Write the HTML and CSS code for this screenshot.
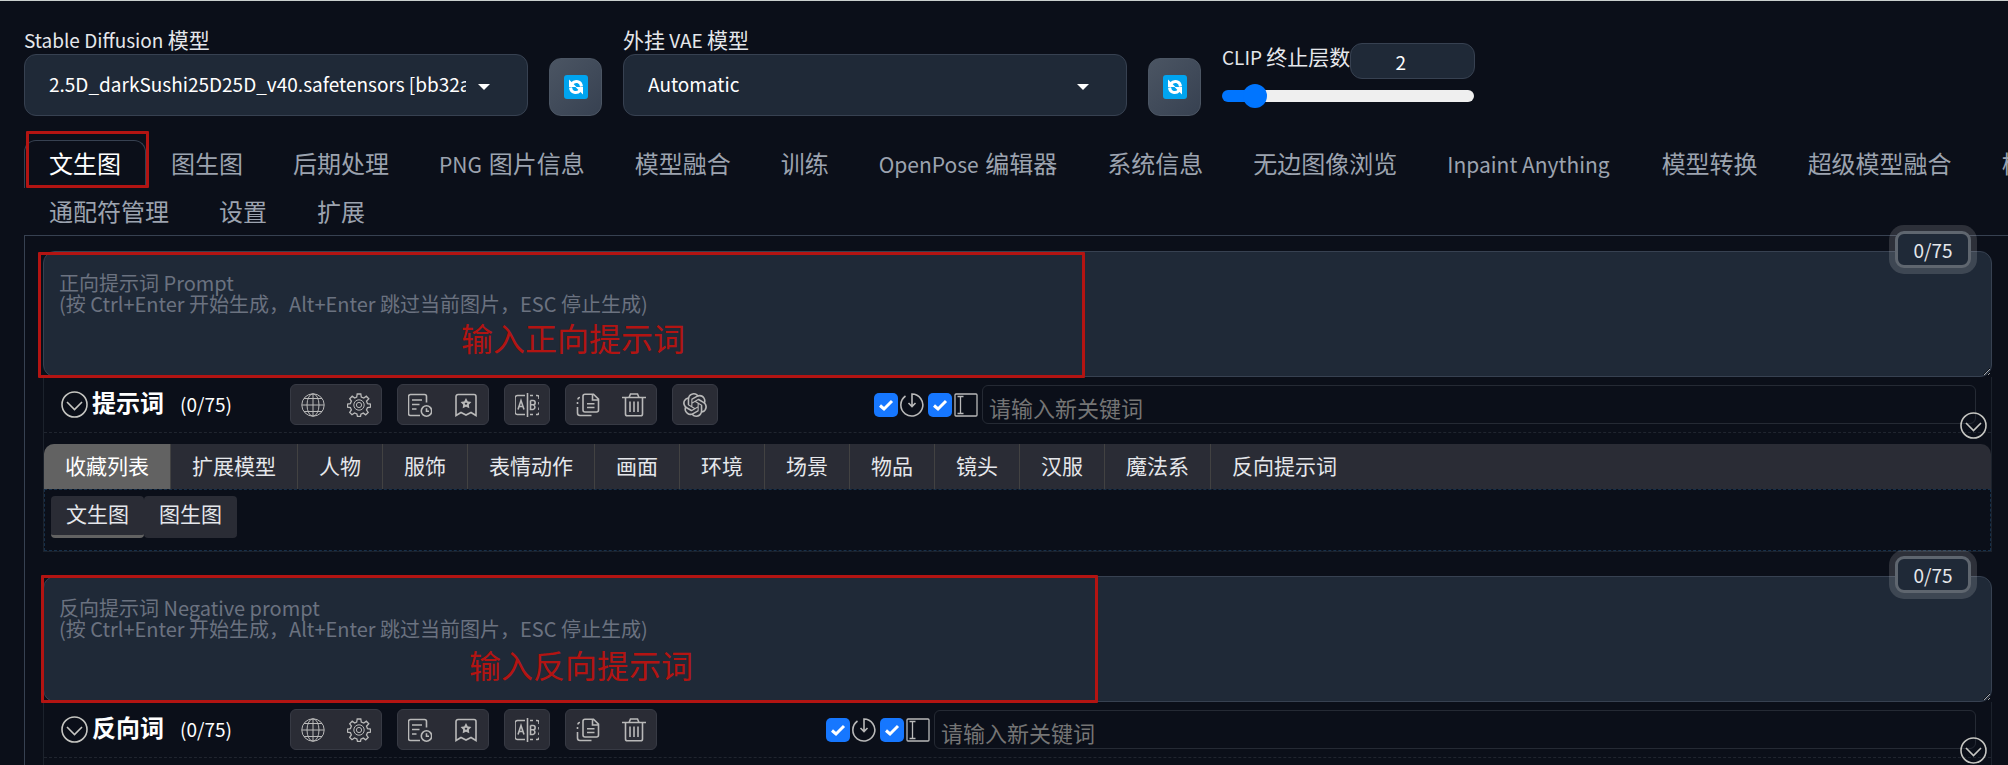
FILE: index.html
```html
<!DOCTYPE html>
<html lang="zh-CN">
<head>
<meta charset="utf-8">
<title>Stable Diffusion</title>
<link rel="stylesheet" href="styles.css">
</head>
<body>
<svg class="sprite" aria-hidden="true">
  <symbol id="i-down" viewBox="0 0 27 27"><circle cx="13.500" cy="13.500" r="12.500"/><path d="M6 11l7.500 7.500L21 11"/></symbol>
  <symbol id="i-globe" viewBox="0 0 24 24"><circle cx="12" cy="12" r="11.200"/><ellipse cx="12" cy="12" rx="6" ry="11.200"/><path d="M12 1v22M1 12h22M3 5.500h18M3 18.500h18"/></symbol>
  <symbol id="i-gear" viewBox="0 0 24 24"><path class="m" d="M10.200 1h3.600l.5 3 2.500 1 2.500-1.800 2.500 2.500L19.500 8.200l1 2.500 3 .5v3l-3 .4-1 2.400 1.700 2.500-2.500 2.300-2.400-1.700-2.400 1-.4 2.400h-3l-.6-2.500-2.400-1-2.500 1.700-2.300-2.300 1.700-2.500-1-2.400-2.900-.4v-3l2.900-.5 1-2.500L2.700 5.700l2.500-2.500L7.700 5l2-1z"/><circle cx="12" cy="12" r="5.200"/><circle cx="12" cy="12" r="2.600"/></symbol>
  <symbol id="i-history" viewBox="0 0 24 24"><path class="w" d="M12 22.500H2.500a2 2 0 0 1-2-2v-17a2 2 0 0 1 2-2h14a2 2 0 0 1 2 2V9.500M4 7h10M4 11.500h7.500M4 16h4.500"/><circle class="w" cx="18.500" cy="18" r="5.200"/><path class="w" d="M18.500 15.200v3h2.500"/></symbol>
  <symbol id="i-mark" viewBox="0 0 24 24"><path class="w" d="M2 22.500v-19a2 2 0 0 1 2-2h16a2 2 0 0 1 2 2v19L17 19.500 12 22l-5-2.500z"/><path class="s" d="M12 7.200l1.100 2 2.300.4-1.600 1.700.3 2.300-2.100-1-2.100 1 .3-2.300-1.600-1.700 2.300-.4z"/></symbol>
  <symbol id="i-ab" viewBox="0 0 24 24"><path class="w" d="M10 2.500H2.500a2.500 2.500 0 0 0-2.500 2.500v14a2.500 2.500 0 0 0 2.500 2.500H10M12.500 0v24M15 2.500h3M21 2.500h1q2 0 2 2v1.500M24 9v2.500M24 14.500V17M24 19.500q0 2-2 2h-1M18 21.500h-3M3 16.500L6 7.500l3 9M4 13.500h4M15.500 7.500v9h2.500a2.400 2.400 0 0 0 0-4.700h-2.500M15.500 7.500H18a2.100 2.100 0 0 1 0 4.300"/></symbol>
  <symbol id="i-copy" viewBox="0 0 24 24"><path class="w" d="M9 1.200h8.500l5 5V17a2 2 0 0 1-2 2H9a2 2 0 0 1-2-2V3.200a2 2 0 0 1 2-2zM16.500 1.500V7h5.500M11 10.800h7.500M11 14.500h7.500M4 4.500q-2 0-2 2M1.500 9v2M1.500 14v6q0 2.500 2.500 2.500h11.500"/></symbol>
  <symbol id="i-trash" viewBox="0 0 24 24"><path class="w" d="M0 4.500h24M7 4.500L8.500 1h7L17 4.500M3.500 4.500v16.500q0 1.800 1.800 1.800h13.400q1.800 0 1.800-1.800V4.500M8 8.500v10.500M12 8.500v10.500M16 8.500v10.500"/></symbol>
  <symbol id="i-ai" viewBox="0 0 24 24"><path class="f" d="M22.282 9.821a5.985 5.985 0 0 0-.516-4.910 6.046 6.046 0 0 0-6.510-2.900A6.065 6.065 0 0 0 4.981 4.182a5.985 5.985 0 0 0-3.998 2.900 6.046 6.046 0 0 0 .743 7.097 5.980 5.980 0 0 0 .510 4.911 6.051 6.051 0 0 0 6.515 2.900A5.985 5.985 0 0 0 13.260 24a6.056 6.056 0 0 0 5.772-4.206 5.990 5.990 0 0 0 3.997-2.900 6.056 6.056 0 0 0-.747-7.073zM13.260 22.430a4.476 4.476 0 0 1-2.876-1.040l.141-.081 4.779-2.758a.795.795 0 0 0 .392-.681v-6.737l2.020 1.168a.071.071 0 0 1 .038.052v5.583a4.504 4.504 0 0 1-4.494 4.494zM3.600 18.304a4.470 4.470 0 0 1-.535-3.014l.142.085 4.783 2.759a.771.771 0 0 0 .780 0l5.843-3.369v2.332a.080.080 0 0 1-.033.062L9.740 19.950a4.500 4.500 0 0 1-6.140-1.646zM2.340 7.896a4.485 4.485 0 0 1 2.366-1.973V11.600a.766.766 0 0 0 .388.677l5.815 3.354-2.020 1.169a.076.076 0 0 1-.071 0l-4.830-2.787A4.504 4.504 0 0 1 2.340 7.872zm16.597 3.855l-5.833-3.387L15.119 7.200a.076.076 0 0 1 .071 0l4.830 2.791a4.494 4.494 0 0 1-.676 8.105v-5.678a.790.790 0 0 0-.407-.667zm2.010-3.023l-.141-.085-4.774-2.782a.776.776 0 0 0-.785 0L9.409 9.230V6.897a.066.066 0 0 1 .028-.061l4.830-2.787a4.499 4.499 0 0 1 6.680 4.660zM8.307 12.863l-2.020-1.164a.080.080 0 0 1-.038-.057V6.074a4.499 4.499 0 0 1 7.376-3.453l-.142.080L8.704 5.459a.795.795 0 0 0-.393.681zm1.097-2.365l2.602-1.500 2.607 1.500v2.999l-2.597 1.500-2.607-1.500z"/></symbol>
  <symbol id="i-enter" viewBox="0 0 24 24"><path class="w" d="M12 13V1A11 11 0 1 1 5.500 3M8.500 10l3.500 3.500 3.500-3.500"/></symbol>
  <symbol id="i-cursor" viewBox="0 0 24 24"><rect class="m" x="1" y="1" width="22" height="22" rx="1"/><path class="m" d="M3.500 3.500h6M6.500 3.500v17M3.500 20.500h6"/></symbol>
  <symbol id="i-refresh" viewBox="0 0 24 24"><rect class="b" width="24" height="24" rx="3"/><path class="r" d="M8 8.500C11 5 17 6 17.500 11.500M16 15.500C13 19 7 18 6.500 12.500"/><path class="h" d="M5 4.500V12h7.500zM19 19.500V12h-7.500z"/></symbol>
</svg>

<header class="quick">
  <div class="field">
    <label for="model"><span class="en">Stable Diffusion </span>模型</label>
    <div class="pick"><select id="model"><option>2.5D_darkSushi25D25D_v40.safetensors [bb32ad727a]</option></select></div>
  </div>
  <button class="refresh" type="button" aria-label="刷新模型"><svg><use href="#i-refresh"/></svg></button>
  <div class="field">
    <label for="vae">外挂<span class="en"> VAE </span>模型</label>
    <div class="pick"><select id="vae"><option>Automatic</option></select></div>
  </div>
  <button class="refresh" type="button" aria-label="刷新 VAE"><svg><use href="#i-refresh"/></svg></button>
  <div class="clip">
    <div class="clip-top">
      <label for="clip"><span class="en">CLIP </span>终止层数</label>
      <input class="clip-num" id="clip" type="text" inputmode="numeric" value="2">
    </div>
    <input class="clip-range" type="range" min="1" max="12" value="2" aria-label="CLIP 终止层数">
  </div>
</header>

<nav class="tabs">
  <div class="tab-row">
    <button class="tab active" type="button">文生图<span class="mark mark-tab"></span></button>
    <button class="tab" type="button">图生图</button>
    <button class="tab" type="button">后期处理</button>
    <button class="tab" type="button"><span class="en">PNG </span>图片信息</button>
    <button class="tab" type="button">模型融合</button>
    <button class="tab" type="button">训练</button>
    <button class="tab" type="button"><span class="en">OpenPose </span>编辑器</button>
    <button class="tab" type="button">系统信息</button>
    <button class="tab" type="button">无边图像浏览</button>
    <button class="tab" type="button"><span class="en">Inpaint Anything</span></button>
    <button class="tab" type="button">模型转换</button>
    <button class="tab" type="button">超级模型融合</button>
    <button class="tab" type="button">模型</button>
  </div>
  <div class="tab-row">
    <button class="tab" type="button">通配符管理</button>
    <button class="tab" type="button">设置</button>
    <button class="tab" type="button">扩展</button>
  </div>
</nav>

<main class="panel">
  <section class="prompt">
    <div class="entry">
      <textarea aria-label="正向提示词" placeholder="正向提示词 Prompt&#10;(按 Ctrl+Enter 开始生成，Alt+Enter 跳过当前图片，ESC 停止生成)"></textarea>
      <span class="count">0/75</span>
      <span class="mark mark-pos"></span>
      <span class="note note-pos">输入正向提示词</span>
    </div>
    <div class="tools">
      <div class="bar">
        <div class="title">
          <button class="round" type="button" aria-label="折叠"><svg><use href="#i-down"/></svg></button>
          <h2>提示词</h2>
          <span class="en">(0/75)</span>
        </div>
        <div class="groups">
          <div class="group"><button type="button" aria-label="语言"><svg><use href="#i-globe"/></svg></button><button type="button" aria-label="设置"><svg><use href="#i-gear"/></svg></button></div>
          <div class="group"><button type="button" aria-label="历史"><svg><use href="#i-history"/></svg></button><button type="button" aria-label="收藏"><svg><use href="#i-mark"/></svg></button></div>
          <div class="group"><button type="button" aria-label="翻译"><svg><use href="#i-ab"/></svg></button></div>
          <div class="group"><button type="button" aria-label="复制"><svg><use href="#i-copy"/></svg></button><button type="button" aria-label="删除"><svg><use href="#i-trash"/></svg></button></div>
          <div class="group"><button type="button" aria-label="ChatGPT"><svg><use href="#i-ai"/></svg></button></div>
        </div>
        <div class="add">
          <label><input type="checkbox" checked aria-label="回车添加"><svg><use href="#i-enter"/></svg></label>
          <label><input type="checkbox" checked aria-label="输入框"><svg><use href="#i-cursor"/></svg></label>
          <input class="keyword" type="text" placeholder="请输入新关键词" aria-label="新关键词">
        </div>
        <button class="round fold" type="button" aria-label="展开"><svg><use href="#i-down"/></svg></button>
      </div>
      <div class="library">
        <div class="cats">
          <button class="active" type="button">收藏列表</button>
          <button type="button">扩展模型</button>
          <button type="button">人物</button>
          <button type="button">服饰</button>
          <button type="button">表情动作</button>
          <button type="button">画面</button>
          <button type="button">环境</button>
          <button type="button">场景</button>
          <button type="button">物品</button>
          <button type="button">镜头</button>
          <button type="button">汉服</button>
          <button type="button">魔法系</button>
          <button type="button">反向提示词</button>
        </div>
        <div class="subs">
          <button class="active" type="button">文生图</button>
          <button type="button">图生图</button>
        </div>
      </div>
    </div>
  </section>

  <section class="prompt">
    <div class="entry">
      <textarea aria-label="反向提示词" placeholder="反向提示词 Negative prompt&#10;(按 Ctrl+Enter 开始生成，Alt+Enter 跳过当前图片，ESC 停止生成)"></textarea>
      <span class="count">0/75</span>
      <span class="mark mark-neg"></span>
      <span class="note note-neg">输入反向提示词</span>
    </div>
    <div class="tools">
      <div class="bar">
        <div class="title">
          <button class="round" type="button" aria-label="折叠"><svg><use href="#i-down"/></svg></button>
          <h2>反向词</h2>
          <span class="en">(0/75)</span>
        </div>
        <div class="groups">
          <div class="group"><button type="button" aria-label="语言"><svg><use href="#i-globe"/></svg></button><button type="button" aria-label="设置"><svg><use href="#i-gear"/></svg></button></div>
          <div class="group"><button type="button" aria-label="历史"><svg><use href="#i-history"/></svg></button><button type="button" aria-label="收藏"><svg><use href="#i-mark"/></svg></button></div>
          <div class="group"><button type="button" aria-label="翻译"><svg><use href="#i-ab"/></svg></button></div>
          <div class="group"><button type="button" aria-label="复制"><svg><use href="#i-copy"/></svg></button><button type="button" aria-label="删除"><svg><use href="#i-trash"/></svg></button></div>
        </div>
        <div class="add add-neg">
          <label><input type="checkbox" checked aria-label="回车添加"><svg><use href="#i-enter"/></svg></label>
          <label><input type="checkbox" checked aria-label="输入框"><svg><use href="#i-cursor"/></svg></label>
          <input class="keyword" type="text" placeholder="请输入新关键词" aria-label="新关键词">
        </div>
        <button class="round fold" type="button" aria-label="展开"><svg><use href="#i-down"/></svg></button>
      </div>
      <div class="library"></div>
    </div>
  </section>
</main>
</body>
</html>
```

FILE: styles.css
```css
* { box-sizing: border-box; }

html { background: #0b0f19; }

body {
  margin: 0;
  height: 100vh;
  overflow: hidden;
  border-top: 1px solid #c9cfcd;
  padding: 25px 0 0 24px;
  background: #0b0f19;
  color: #e5e7eb;
  font: 21px/26px "Noto Sans CJK SC", "Noto Sans", sans-serif;
}

button, input, select, textarea { font: inherit; color: inherit; }

button {
  margin: 0;
  padding: 0;
  border: 0;
  background: none;
  white-space: nowrap;
}

.sprite { position: absolute; width: 0; height: 0; }

svg {
  display: block;
  width: 24px;
  height: 24px;
  fill: none;
  stroke: #b9b9b9;
  stroke-width: 1;
  overflow: visible;
}

.w { stroke-width: 1.6; }
.m { stroke-width: 1.3; }
.s { stroke-width: 2; }
.f { fill: #b9b9b9; stroke: none; }
.b { fill: #00a4ef; stroke: none; }
.r { stroke: #fff; stroke-width: 3; }
.h { fill: #fff; stroke: none; }

/* Latin text is set smaller than the Chinese beside it */
.en { font-size: 19px; line-height: 1; white-space: pre; }

/* Quick settings */
.quick {
  display: flex;
  align-items: flex-end;
  gap: 21px;
}

.field { width: 504px; }
.field label { display: block; padding-bottom: 2px; }

.pick { position: relative; }

.pick select {
  display: block;
  width: 100%;
  height: 62px;
  padding: 0 61px 2px 24px;
  border: 1px solid #374151;
  border-radius: 12px;
  background: #1f2937;
  color: #fff;
  font-size: 19px;
  appearance: none;
}

.pick::after {
  content: "";
  position: absolute;
  right: 38px;
  top: 30px;
  width: 12px;
  height: 6px;
  background: #fff;
  clip-path: polygon(0 0, 100% 0, 50% 100%);
}

.refresh {
  display: grid;
  place-items: center;
  width: 53px;
  height: 58px;
  border: 1px solid #4b5563;
  border-radius: 12px;
  background: linear-gradient(135deg, #4b5563, #374151);
}

.clip { width: 252px; padding-bottom: 8px; }
.clip-top { display: flex; justify-content: space-between; white-space: nowrap; }

.clip-num {
  width: 125px;
  height: 36px;
  padding: 0 24px 0 0;
  border: 1px solid #374151;
  border-radius: 12px;
  background: #1f2937;
  color: #fff;
  font-size: 19px;
  text-align: center;
}

.clip-range {
  display: block;
  width: 100%;
  height: 24px;
  margin: 5px 0 0;
  background: none;
  appearance: none;
}

.clip-range::-webkit-slider-runnable-track {
  height: 12px;
  border-radius: 6px;
  background: linear-gradient(90deg, #0075ff 12%, #efefef 12%);
}

.clip-range::-webkit-slider-thumb {
  width: 24px;
  height: 24px;
  margin-top: -6px;
  border-radius: 50%;
  background: #0075ff;
  appearance: none;
}

/* Main tabs */
.tabs { margin-top: 24px; overflow-x: clip; }
.tab-row { display: flex; height: 48px; }
.tab-row + .tab-row { height: 47px; }

.tab {
  position: relative;
  flex: none;
  padding: 0 24px 3px;
  border: 1px solid transparent;
  border-bottom: 0;
  border-radius: 12px 12px 0 0;
  color: #9ca3af;
  font-size: 24px;
}

.tab .en { margin-right: 2px; font-size: 21px; }
.tab.active { border-color: #374151; color: #fff; }

/* Prompt panel */
.panel {
  padding: 15px 16px 0 18px;
  border: 1px solid #374151;
  border-right: 0;
}

.prompt { margin-bottom: 24px; }

.entry { position: relative; }

.entry textarea {
  display: block;
  width: 100%;
  height: 126px;
  padding: 20px 15px;
  border: 1px solid #374151;
  border-radius: 12px;
  background: #1f2937;
  font-size: 20px;
  line-height: 21px;
  resize: vertical;
}

.entry textarea::placeholder { color: #6b7280; }

.count {
  position: absolute;
  top: -20px;
  right: 21px;
  width: 76px;
  border: 3px solid #5f666f;
  border-radius: 9px;
  box-shadow: 0 0 0 6px rgba(255, 255, 255, .14);
  background: #1f2937;
  font-size: 19px;
  line-height: 31px;
  text-align: center;
}

.mark {
  position: absolute;
  border: 3px solid #b31412;
  border-radius: 1px;
  pointer-events: none;
}

.mark-tab { left: 1px; top: -10px; width: 123px; height: 57px; }
.mark-pos { left: -5px; top: 1px; width: 1047px; height: 126px; }
.mark-neg { left: -2px; top: -1px; width: 1057px; height: 128px; }

.note {
  position: absolute;
  color: #b31412;
  font-size: 32px;
  line-height: 40px;
}

.note-pos { left: 418px; top: 66px; }
.note-neg { left: 426px; top: 68px; }

.tools {
  border: 1px solid #1c222c;
  border-top: 0;
}

.bar {
  position: relative;
  display: flex;
  align-items: center;
  height: 56px;
  padding: 0 15px 0 17px;
  border-bottom: 1px dashed #20252f;
}

.title { display: flex; align-items: center; width: 229px; }
.title h2 { margin: 0 16px 0 4px; padding-bottom: 5px; color: #fff; font-size: 24px; }
.title .en { padding-bottom: 3px; color: #fff; }

.round svg { width: 27px; height: 27px; stroke: #c6c6c2; stroke-width: 1.6; }

.fold {
  position: absolute;
  right: 4px;
  bottom: -7px;
}

.groups { display: flex; gap: 15px; }

.group {
  display: flex;
  gap: 22px;
  height: 41px;
  padding: 0 10px;
  align-items: center;
  border: 1px solid #373a44;
  border-radius: 6px;
  background: #2a2c35;
}

.add {
  display: flex;
  flex: 1;
  align-items: center;
  gap: 4px;
  margin-left: 156px;
}

.add-neg { margin-left: 169px; }
.add label { display: flex; gap: 2px; }

.add input[type="checkbox"] {
  width: 24px;
  height: 24px;
  margin: 0;
  border-radius: 5px;
  background: #1677ff url("data:image/svg+xml,%3Csvg xmlns='http://www.w3.org/2000/svg' viewBox='0 0 24 24'%3E%3Cpath d='M6 12.500l4 3.500 8-8' fill='none' stroke='white' stroke-width='3'/%3E%3C/svg%3E");
  appearance: none;
}

.keyword {
  flex: 1;
  height: 39px;
  padding: 4px 6px 0;
  border: 1px solid #252a34;
  border-radius: 6px;
  background: none;
  font-size: 22px;
}

.keyword::placeholder { color: #757575; }

.library { padding-top: 11px; }

.cats {
  display: flex;
  height: 45px;
  border-radius: 10px 10px 0 0;
  background: #2a2c35;
  overflow: hidden;
}

.cats button { padding: 0 21px 4px; border-right: 1px solid #424242; }
.cats button:last-child { border-right: 0; }
.cats .active { background: #626262; color: #fff; }

.subs {
  display: flex;
  height: 62px;
  padding: 6px;
  border: 1px dashed #17304a;
}

.subs button {
  height: 42px;
  padding: 0 15px 5px;
  border-bottom: 3px solid #2a2c35;
  border-radius: 4px;
  background: #2a2c35;
}

.subs .active { border-color: #626262; }
```
